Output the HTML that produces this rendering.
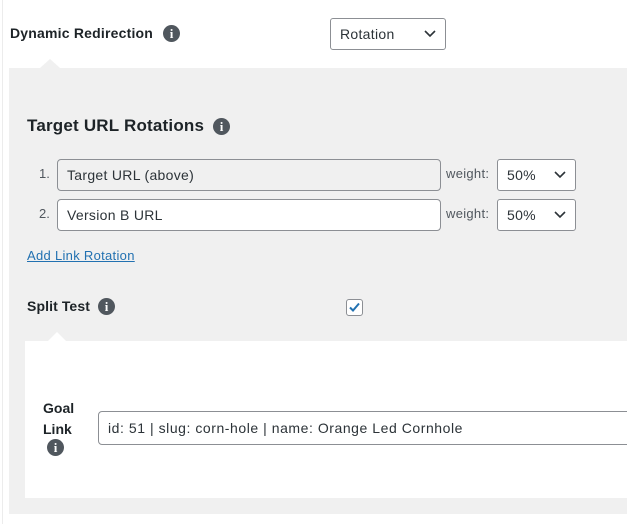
<!DOCTYPE html>
<html><head><meta charset="utf-8"><style>
*{box-sizing:border-box;margin:0;padding:0}
body{width:627px;height:524px;background:#fff;font-family:"Liberation Sans",sans-serif;color:#1d2327;position:relative;overflow:hidden;font-size:14px}
.a{position:absolute}
.info{position:absolute;width:17px;height:17px;border-radius:50%;background:#50575e;color:#fff;font:bold 13px/17px "Liberation Serif",serif;text-align:center}
.sel{position:absolute;border:1px solid #8c8f94;border-radius:3px;background:#fff;font-size:14px;padding-left:9px;line-height:30px;color:#2c3338;letter-spacing:0.3px}
.sel svg{position:absolute;right:9px;top:11px}
.inp{position:absolute;border:1px solid #8c8f94;border-radius:4px;background:#fff;font-size:14px;padding-left:9px;line-height:30px;color:#2c3338;letter-spacing:0.3px}
</style></head><body>
<div class="a" style="left:2px;top:0;width:1px;height:524px;background:#ececec"></div>
<div class="a" style="left:10px;top:25px;font-size:14px;font-weight:bold;letter-spacing:0.2px">Dynamic Redirection</div>
<div class="info" style="left:163px;top:25px">i</div>
<div class="sel" style="left:330px;top:18px;width:116px;height:32px">Rotation<svg width="12" height="8" viewBox="0 0 12 8"><path d="M1 1l5 5 5-5" fill="none" stroke="#2c3338" stroke-width="1.6"/></svg></div>

<div class="a" style="left:9px;top:68px;width:618px;height:446px;background:#f0f0f0"></div>
<div class="a" style="left:40px;top:59px;width:0;height:0;border-left:10px solid transparent;border-right:10px solid transparent;border-bottom:9px solid #f0f0f0"></div>

<div class="a" style="left:27px;top:116px;font-size:17px;font-weight:bold;letter-spacing:0.2px">Target URL Rotations</div>
<div class="info" style="left:213px;top:118px">i</div>

<div class="a" style="left:39px;top:166px;font-size:13px;color:#50575e">1.</div>
<div class="inp" style="left:57px;top:159px;width:384px;height:32px;background:#f0f0f0">Target URL (above)</div>
<div class="a" style="left:446px;top:166px;font-size:13px;color:#50575e;letter-spacing:0.3px">weight:</div>
<div class="sel" style="left:497px;top:159px;width:79px;height:32px">50%<svg width="12" height="8" viewBox="0 0 12 8"><path d="M1 1l5 5 5-5" fill="none" stroke="#2c3338" stroke-width="1.6"/></svg></div>

<div class="a" style="left:39px;top:206px;font-size:13px;color:#50575e">2.</div>
<div class="inp" style="left:57px;top:199px;width:384px;height:32px">Version B URL</div>
<div class="a" style="left:446px;top:206px;font-size:13px;color:#50575e;letter-spacing:0.3px">weight:</div>
<div class="sel" style="left:497px;top:199px;width:79px;height:32px">50%<svg width="12" height="8" viewBox="0 0 12 8"><path d="M1 1l5 5 5-5" fill="none" stroke="#2c3338" stroke-width="1.6"/></svg></div>

<div class="a" style="left:27px;top:248px;font-size:13px;color:#2271b1;text-decoration:underline;letter-spacing:0.3px">Add Link Rotation</div>

<div class="a" style="left:27px;top:298px;font-size:14px;font-weight:bold;letter-spacing:0.1px">Split Test</div>
<div class="info" style="left:98px;top:298px">i</div>
<div class="a" style="left:346px;top:299px;width:17px;height:17px;border:1px solid #8c8f94;border-radius:3px;background:#fff"><svg width="15" height="15" viewBox="0 0 15 15" style="position:absolute;left:0;top:0"><path d="M3 7.5l3 3 6-7" fill="none" stroke="#2271b1" stroke-width="2"/></svg></div>

<div class="a" style="left:25px;top:341px;width:602px;height:157px;background:#fff"></div>
<div class="a" style="left:48px;top:332px;width:0;height:0;border-left:9px solid transparent;border-right:9px solid transparent;border-bottom:9px solid #fff"></div>

<div class="a" style="left:43px;top:398px;font-size:14px;font-weight:bold;line-height:21px">Goal<br>Link</div>
<div class="info" style="left:47px;top:439px">i</div>
<div class="inp" style="left:98px;top:411px;width:540px;height:34px;line-height:32px;letter-spacing:0.55px">id: 51 | slug: corn-hole | name: Orange Led Cornhole</div>
</body></html>
